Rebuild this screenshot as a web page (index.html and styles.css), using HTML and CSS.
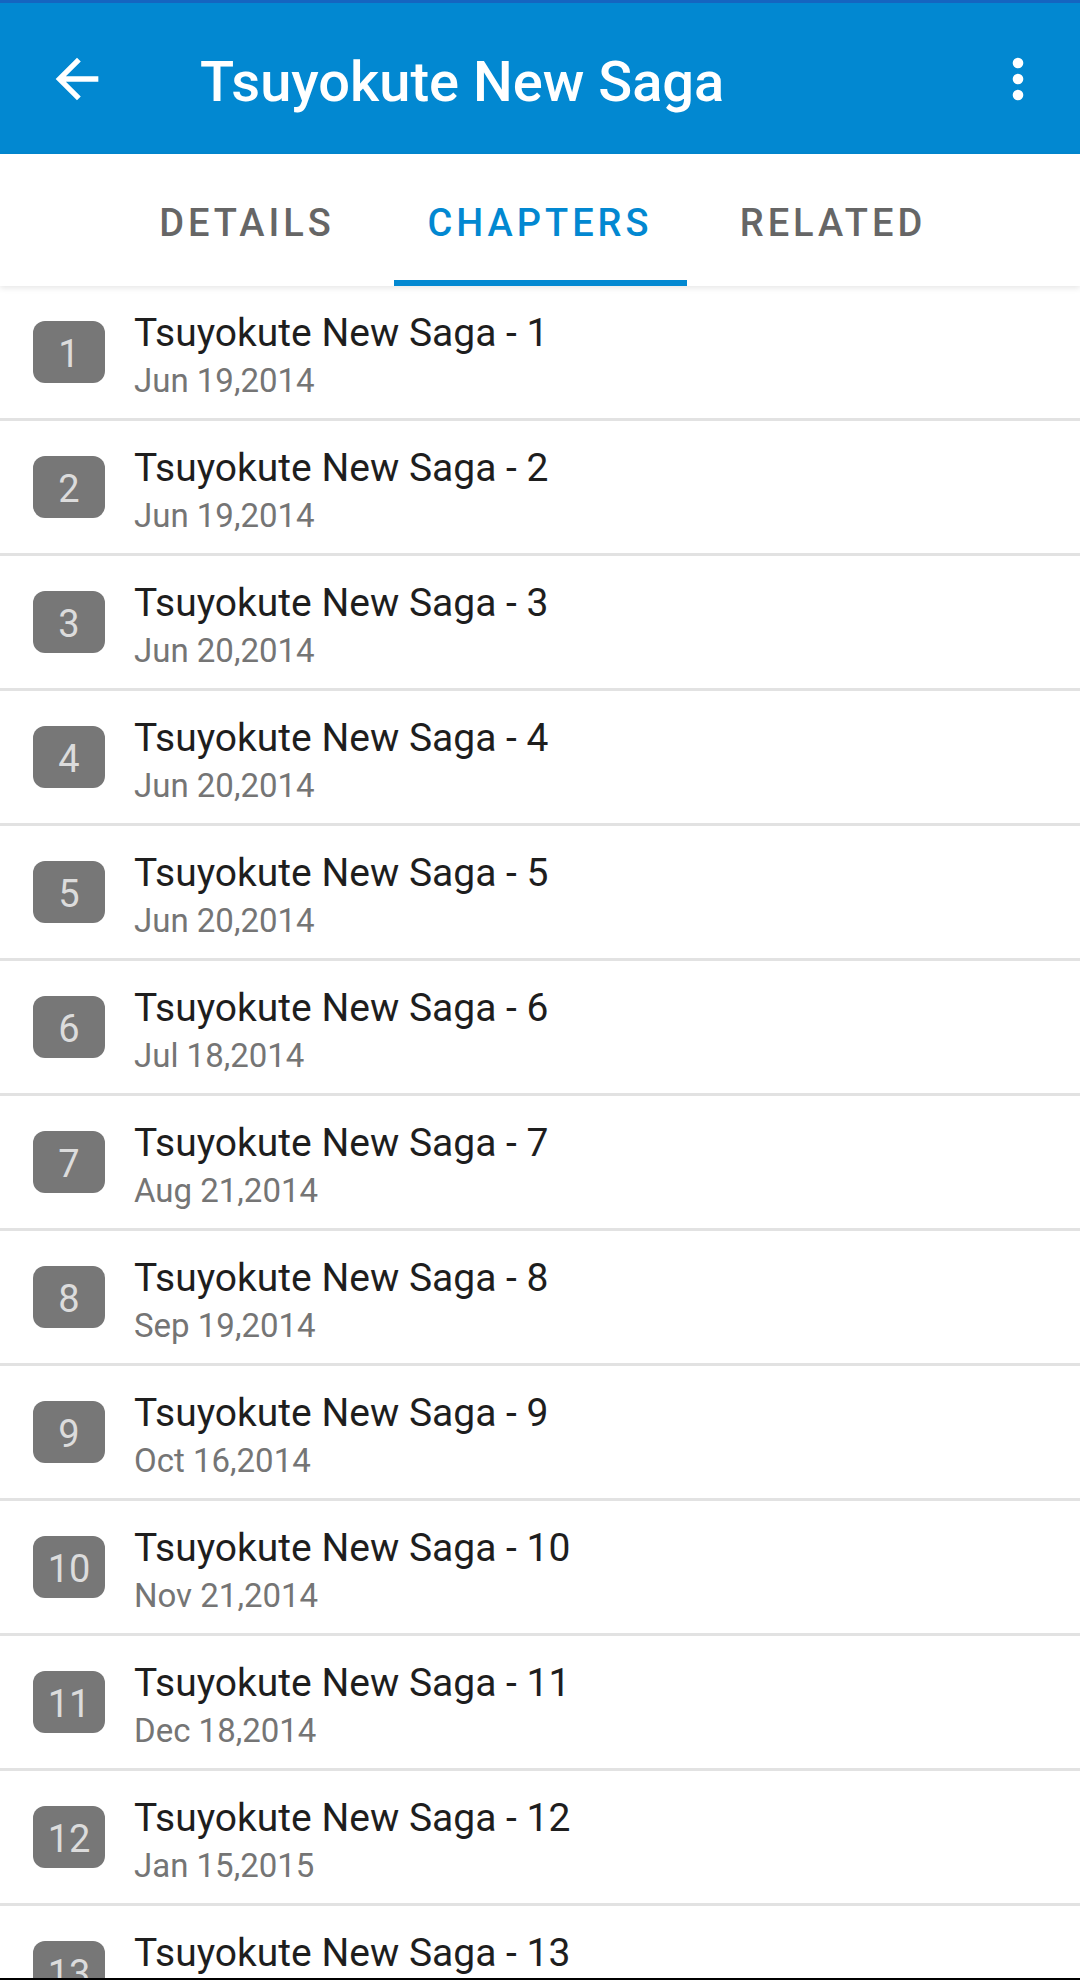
FILE: index.html
```html
<!DOCTYPE html>
<html>
<head>
<meta charset="utf-8">
<link rel="stylesheet" href="styles.css">
</head>
<body>
<div class="app">
  <header class="toolbar">
    <svg class="icon back" viewBox="0 0 24 24" width="64" height="64"><path fill="#fff" d="M20 11H7.83l5.59-5.59L12 4l-8 8 8 8 1.41-1.41L7.83 13H20v-2z"/></svg>
    <h1 class="title">Tsuyokute New Saga</h1>
    <svg class="icon more" viewBox="0 0 24 24" width="64" height="64"><circle cx="12" cy="6" r="2" fill="#fff"/><circle cx="12" cy="12" r="2" fill="#fff"/><circle cx="12" cy="18" r="2" fill="#fff"/></svg>
  </header>
  <nav class="tabs">
    <div class="tab">DETAILS</div>
    <div class="tab active">CHAPTERS</div>
    <div class="tab">RELATED</div>
  </nav>
  <ul class="list">
    <li class="row"><div class="badge">1</div><div class="info"><div class="name">Tsuyokute New Saga - 1</div><div class="date">Jun 19,2014</div></div></li>
    <li class="row"><div class="badge">2</div><div class="info"><div class="name">Tsuyokute New Saga - 2</div><div class="date">Jun 19,2014</div></div></li>
    <li class="row"><div class="badge">3</div><div class="info"><div class="name">Tsuyokute New Saga - 3</div><div class="date">Jun 20,2014</div></div></li>
    <li class="row"><div class="badge">4</div><div class="info"><div class="name">Tsuyokute New Saga - 4</div><div class="date">Jun 20,2014</div></div></li>
    <li class="row"><div class="badge">5</div><div class="info"><div class="name">Tsuyokute New Saga - 5</div><div class="date">Jun 20,2014</div></div></li>
    <li class="row"><div class="badge">6</div><div class="info"><div class="name">Tsuyokute New Saga - 6</div><div class="date">Jul 18,2014</div></div></li>
    <li class="row"><div class="badge">7</div><div class="info"><div class="name">Tsuyokute New Saga - 7</div><div class="date">Aug 21,2014</div></div></li>
    <li class="row"><div class="badge">8</div><div class="info"><div class="name">Tsuyokute New Saga - 8</div><div class="date">Sep 19,2014</div></div></li>
    <li class="row"><div class="badge">9</div><div class="info"><div class="name">Tsuyokute New Saga - 9</div><div class="date">Oct 16,2014</div></div></li>
    <li class="row"><div class="badge">10</div><div class="info"><div class="name">Tsuyokute New Saga - 10</div><div class="date">Nov 21,2014</div></div></li>
    <li class="row"><div class="badge">11</div><div class="info"><div class="name">Tsuyokute New Saga - 11</div><div class="date">Dec 18,2014</div></div></li>
    <li class="row"><div class="badge">12</div><div class="info"><div class="name">Tsuyokute New Saga - 12</div><div class="date">Jan 15,2015</div></div></li>
    <li class="row"><div class="badge">13</div><div class="info"><div class="name">Tsuyokute New Saga - 13</div><div class="date">Feb 19,2015</div></div></li>
  </ul>
</div>
<div class="navbar"></div>
</body>
</html>
```
FILE: styles.css
```css
* { box-sizing: border-box; }
html, body {
  margin: 0;
  padding: 0;
  width: 1080px;
  height: 1980px;
  overflow: hidden;
  background: #fff;
  font-family: Roboto, "Noto Sans", sans-serif;
}
.app {
  width: 1080px;
  height: 1980px;
  overflow: hidden;
  display: flex;
  flex-direction: column;
}
.toolbar {
  flex: none;
  height: 154px;
  background: #0288d1;
  border-top: 3px solid #1565c0;
  display: flex;
  align-items: center;
  padding-left: 45px;
  padding-right: 30px;
}
.icon { display: block; flex: none; }
.title {
  margin: 7px 0 0 91px;
  font-size: 56px;
  line-height: 64px;
  font-weight: 500;
  color: #fff;
}
.more { margin-left: auto; }
.tabs {
  flex: none;
  position: relative;
  z-index: 2;
  height: 132px;
  background: #fff;
  display: grid;
  grid-template-columns: repeat(3, 293px);
  justify-content: center;
  box-shadow: 0 2px 6px rgba(0, 0, 0, 0.10);
}
.tab {
  height: 132px;
  padding-top: 47px;
  font-size: 38px;
  line-height: 44px;
  font-weight: 500;
  letter-spacing: 4px;
  text-align: center;
  color: #666;
  border-bottom: 6px solid transparent;
}
.tab.active {
  color: #0288d1;
  border-bottom-color: #0288d1;
}
.list {
  list-style: none;
  margin: 0;
  padding: 0;
}
.row {
  height: 135px;
  border-bottom: 3px solid #e2e2e2;
  display: flex;
  align-items: center;
  padding-left: 33px;
}
.badge {
  flex: none;
  width: 72px;
  height: 62px;
  border-radius: 12px;
  background: #777;
  color: #dcdcdc;
  font-size: 38px;
  display: flex;
  align-items: center;
  justify-content: center;
  padding-top: 4px;
}
.info {
  align-self: flex-start;
  padding-top: 24px;
  margin-left: 29px;
}
.name {
  font-size: 39px;
  line-height: 46px;
  color: #1e1e1e;
}
.date {
  margin-top: 5px;
  font-size: 33px;
  line-height: 40px;
  color: #757575;
}
.navbar {
  position: fixed;
  left: 0;
  right: 0;
  bottom: 0;
  height: 2px;
  background: #000;
}
```
